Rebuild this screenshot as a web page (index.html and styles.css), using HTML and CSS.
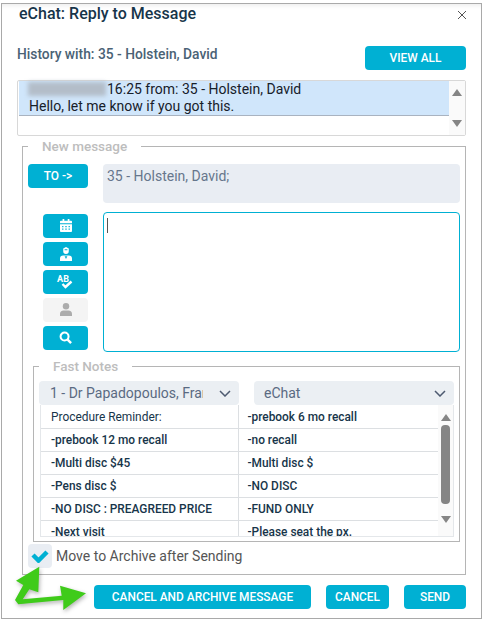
FILE: index.html
```html
<!DOCTYPE html>
<html lang="en">

<head>
    <meta charset="UTF-8">
    <meta name="viewport" content="width=device-width, initial-scale=1.0">
    <title>eChat: Reply to Message</title>
    <link rel="stylesheet" href="styles.css">
</head>

<body>
    <section class="window">
        <header class="title-bar">
            <h1 class="title">eChat: Reply to Message</h1>
            <svg class="close" width="10" height="10" viewBox="0 0 10 10"><path d="M1 1l8 8M9 1l-8 8" /></svg>
        </header>

        <div class="history-bar">
            <h2 class="history-title">History with: 35 - Holstein, David</h2>
            <button class="btn btn-view">VIEW ALL</button>
        </div>

        <div class="history-list">
            <div class="history-rows">
                <div class="history-row">
                    <div class="history-head"><span class="blurred"></span>16:25 from: 35 - Holstein, David</div>
                    <div class="history-text">Hello, let me know if you got this.</div>
                </div>
            </div>
            <div class="scrollbar scrollbar-history">
                <span class="arrow-up"></span>
                <span class="arrow-down"></span>
            </div>
        </div>

        <fieldset class="group group-new">
            <legend class="group-label">New message</legend>
            <div class="to-row">
                <button class="btn btn-to">TO -&gt;</button>
                <div class="to-field">35 - Holstein, David;</div>
            </div>
            <div class="compose-row">
                <div class="tools">
                    <button class="btn btn-tool">
                        <svg width="12" height="13" viewBox="0 0 14 15" fill="#fff"><path d="M3 0h2v2h4V0h2v2h2a1 1 0 0 1 1 1v2H0V3a1 1 0 0 1 1-1h2zM0 6h14v8a1 1 0 0 1-1 1H1a1 1 0 0 1-1-1zm2.500 2v1.500H4V8zm3.700 0v1.500h1.600V8zm3.800 0v1.500h1.500V8zm-7.500 3v1.500H4V11zm3.700 0v1.500h1.600V11zm3.800 0v1.500h1.500V11z" fill-rule="evenodd" /></svg>
                    </button>
                    <button class="btn btn-tool">
                        <svg width="12" height="14" viewBox="0 0 13 15" fill="#fff"><path d="M3.500 3V1.500L6.500 0l3 1.500V3v1.500a3 3 0 0 1-6 0zM5 2.300v1.200h3V2.300z" fill-rule="evenodd" /><path d="M0 15v-2.500A3.500 3.500 0 0 1 3.500 9h6a3.500 3.500 0 0 1 3.500 3.500V15zM5 10l1.500 3L8 10z" fill-rule="evenodd" /></svg>
                    </button>
                    <button class="btn btn-tool btn-spell">
                        <span class="spell-text">AB</span>
                        <svg class="spell-check" width="12" height="9" viewBox="0 0 12 9"><path d="M1.500 4l3 3 6-5.500" /></svg>
                    </button>
                    <button class="btn btn-tool btn-off">
                        <svg width="12" height="13" viewBox="0 0 13 14" fill="#acacac"><circle cx="6.500" cy="3.500" r="3.500" /><path d="M0 14v-2a4 4 0 0 1 4-4h5a4 4 0 0 1 4 4v2z" /></svg>
                    </button>
                    <button class="btn btn-tool">
                        <svg width="13" height="13" viewBox="0 0 14 14" fill="none" stroke="#fff"><circle cx="6" cy="6" r="4.300" stroke-width="2.200" /><path d="M9.300 9.300L13 13" stroke-width="2.600" /></svg>
                    </button>
                </div>
                <div class="message-box"><span class="caret"></span></div>
            </div>

            <fieldset class="group group-notes">
                <legend class="group-label">Fast Notes</legend>
                <div class="selects">
                    <div class="select select-doctor">
                        <span class="select-text">1 - Dr Papadopoulos, Frank</span>
                        <svg width="12" height="7" viewBox="0 0 12 7"><path d="M1 1l5 5 5-5" /></svg>
                    </div>
                    <div class="select select-type">
                        <span class="select-text">eChat</span>
                        <svg width="12" height="7" viewBox="0 0 12 7"><path d="M1 1l5 5 5-5" /></svg>
                    </div>
                </div>
                <div class="notes">
                    <table class="notes-table">
                        <tr class="first-row"><td class="plain">Procedure Reminder:</td><td>-prebook 6 mo recall</td></tr>
                        <tr><td>-prebook 12 mo recall</td><td>-no recall</td></tr>
                        <tr><td>-Multi disc $45</td><td>-Multi disc $</td></tr>
                        <tr><td>-Pens disc $</td><td>-NO DISC</td></tr>
                        <tr><td>-NO DISC : PREAGREED PRICE</td><td>-FUND ONLY</td></tr>
                        <tr><td>-Next visit</td><td>-Please seat the px.</td></tr>
                    </table>
                    <div class="scrollbar scrollbar-notes">
                        <span class="arrow-up"></span>
                        <span class="thumb"></span>
                        <span class="arrow-down"></span>
                    </div>
                </div>
            </fieldset>

            <div class="archive-row">
                <span class="checkbox">
                    <svg width="18" height="14" viewBox="0 0 18 14"><path d="M2 6l5.500 5.500L16 3" /></svg>
                </span>
                <span class="archive-label">Move to Archive after Sending</span>
            </div>
        </fieldset>

        <footer class="actions">
            <button class="btn btn-archive">CANCEL AND ARCHIVE MESSAGE</button>
            <button class="btn btn-cancel">CANCEL</button>
            <button class="btn btn-send">SEND</button>
        </footer>

        <svg class="pointer" width="76" height="52" viewBox="0 0 76 52">
            <path d="M25.300 4.700L2 18.700l7.300 4.300L1 38l3.300 4.300L49.300 38v10L72 31.300 46 23.700l1.700 10-39 3.600 6.600-10 9 3z" />
        </svg>
    </section>
</body>

</html>
```

FILE: styles.css
```css
* {
    box-sizing: border-box;
}

body {
    margin: 0;
    background-color: #fff;
    font-family: Roboto, "Liberation Sans", sans-serif;
}

.window {
    position: relative;
    width: 481px;
    height: 616px;
    margin: 3px 0 0 1px;
    padding: 0 15px;
    overflow: hidden;
    background-color: #fff;
    border: 1px solid #a9a9a9;
    box-shadow: inset 0 6px 6px -6px rgba(0, 0, 0, 0.12);
}

.title-bar {
    display: flex;
    justify-content: space-between;
    align-items: center;
    height: 20px;
    margin: 0 -1px 0 2px;
}

.title {
    margin: 0;
    color: #17354a;
    font-size: 16px;
    font-weight: 500;
    line-height: 20px;
}

.close {
    fill: none;
    stroke: #555;
    margin-top: 1px;
}

.history-bar {
    display: flex;
    justify-content: space-between;
    align-items: flex-start;
    height: 24px;
    margin-top: 22px;
}

.history-title {
    margin: -1px 0 0;
    color: #4a6275;
    font-size: 13.8px;
    font-weight: 500;
    line-height: 18px;
}

.btn {
    display: flex;
    justify-content: center;
    align-items: center;
    height: 24px;
    padding: 0 0 1px;
    color: #fff;
    background-color: #00b0d3;
    border: 0;
    border-radius: 4px;
    font-family: inherit;
    font-size: 11.9px;
    font-weight: 500;
}

.btn-view {
    width: 101px;
}

.history-list {
    display: flex;
    height: 56px;
    margin-top: 10px;
    border: 1px solid #d8d8d8;
    border-radius: 2px;
}

.history-rows {
    flex: 1;
    padding-left: 1px;
}

.history-row {
    height: 35px;
    padding-left: 10px;
    background-color: #d0e6fb;
    border-bottom: 1px solid #a9b3c0;
    color: #17202a;
    font-size: 14px;
    line-height: 17px;
}

.history-head {
    display: flex;
}

.blurred {
    width: 78px;
    height: 14px;
    margin: 1px 1px 0 -1px;
    background-color: #b3bdc9;
    filter: blur(2px);
}

.scrollbar {
    display: flex;
    flex-direction: column;
    align-items: center;
    background-color: #fafafa;
}

.scrollbar-history {
    justify-content: space-between;
    width: 16px;
    padding: 8px 0;
}

.arrow-up,
.arrow-down {
    width: 0;
    height: 0;
    border-left: 5px solid transparent;
    border-right: 5px solid transparent;
}

.arrow-up {
    border-bottom: 7px solid #858585;
}

.arrow-down {
    border-top: 7px solid #858585;
}

.group {
    min-width: 0;
    margin: 0;
    border: 1px solid #b5b5b5;
}

.group-label {
    padding: 0 14px;
    color: #bdbdbd;
    font-size: 13.5px;
    font-weight: 500;
    line-height: 16px;
}

.group-new {
    height: 437px;
    margin: 2px 0 0 5px;
    padding: 10px 5px 0;
}

.to-row {
    display: flex;
    gap: 15px;
}

.btn-to {
    width: 60px;
}

.to-field {
    flex: 1;
    height: 39px;
    padding: 2px 4px;
    color: #66768c;
    background-color: #e9edf3;
    border-radius: 4px;
    font-size: 14px;
    line-height: 20px;
}

.compose-row {
    display: flex;
    gap: 15px;
    margin-top: 9px;
}

.tools {
    display: flex;
    flex-direction: column;
    gap: 4px;
    margin: 2px 0 0 15px;
}

.btn-tool {
    position: relative;
    width: 45px;
}

.btn-off {
    background-color: #f4f4f4;
}

.spell-text {
    margin: -5px 0 0 -5px;
    font-size: 9px;
    font-weight: 700;
}

.spell-check {
    position: absolute;
    left: 18px;
    top: 10px;
    fill: none;
    stroke: #fff;
    stroke-width: 2.400;
}

.message-box {
    flex: 1;
    height: 140px;
    padding: 5px 3px;
    border: 1px solid #00b0d3;
    border-radius: 4px;
}

.caret {
    display: block;
    width: 1px;
    height: 15px;
    background-color: #555;
}

.group-notes {
    height: 184px;
    margin: 6px 0 0 5px;
    padding: 7px 5px 0;
}

.selects {
    display: flex;
    gap: 15px;
}

.select {
    display: flex;
    justify-content: space-between;
    align-items: center;
    width: 200px;
    height: 24px;
    padding: 0 8px 0 11px;
    color: #5a6a82;
    background-color: #ebeff3;
    border-radius: 4px;
    font-size: 14px;
}

.select svg {
    flex: none;
    fill: none;
    stroke: #4d5a70;
    stroke-width: 1.500;
}

.select-type {
    padding-left: 10px;
}

.select-text {
    width: 153px;
    overflow: hidden;
    white-space: nowrap;
}

.notes {
    display: flex;
    width: 414px;
    height: 132px;
    margin-left: 1px;
    overflow: hidden;
    border: 1px solid #e4e7ea;
    border-top: 0;
}

.notes-table {
    width: 397px;
    flex: none;
    align-self: flex-start;
    border-collapse: collapse;
    table-layout: fixed;
}

.notes-table td {
    height: 23px;
    padding: 0 0 0 10px;
    border-bottom: 1px solid #dcdfe2;
    color: #17354a;
    font-size: 11.9px;
    font-weight: 500;
    white-space: nowrap;
}

.notes-table .first-row td {
    padding-top: 2px;
}

.notes-table td:first-child {
    width: 197px;
}

.notes-table td + td {
    padding-left: 9px;
    border-left: 1px solid #dcdfe2;
}

.notes-table .plain {
    font-weight: 400;
}

.scrollbar-notes {
    flex: 1;
    padding-top: 9px;
}

.scrollbar-notes .thumb {
    width: 9px;
    height: 79px;
    margin: 4px 0 12px;
    background-color: #858585;
    border-radius: 4px;
}

.archive-row {
    display: flex;
    align-items: center;
    gap: 4px;
    margin-top: 2px;
}

.checkbox {
    display: flex;
    justify-content: center;
    align-items: center;
    width: 24px;
    height: 24px;
    background-color: #e9edf3;
    border-radius: 4px;
}

.checkbox svg {
    fill: none;
    stroke: #00b0d3;
    stroke-width: 4.500;
}

.archive-label {
    color: #555;
    font-size: 14px;
}

.actions {
    display: flex;
    justify-content: flex-end;
    gap: 15px;
    margin-top: 10px;
}

.btn-archive {
    width: 217px;
}

.btn-cancel {
    width: 63px;
}

.btn-send {
    width: 62px;
}

.pointer {
    position: absolute;
    left: 12px;
    top: 558px;
    fill: #3fcb1a;
    filter: drop-shadow(1px 2px 2px rgba(0, 0, 0, 0.3));
}
```
